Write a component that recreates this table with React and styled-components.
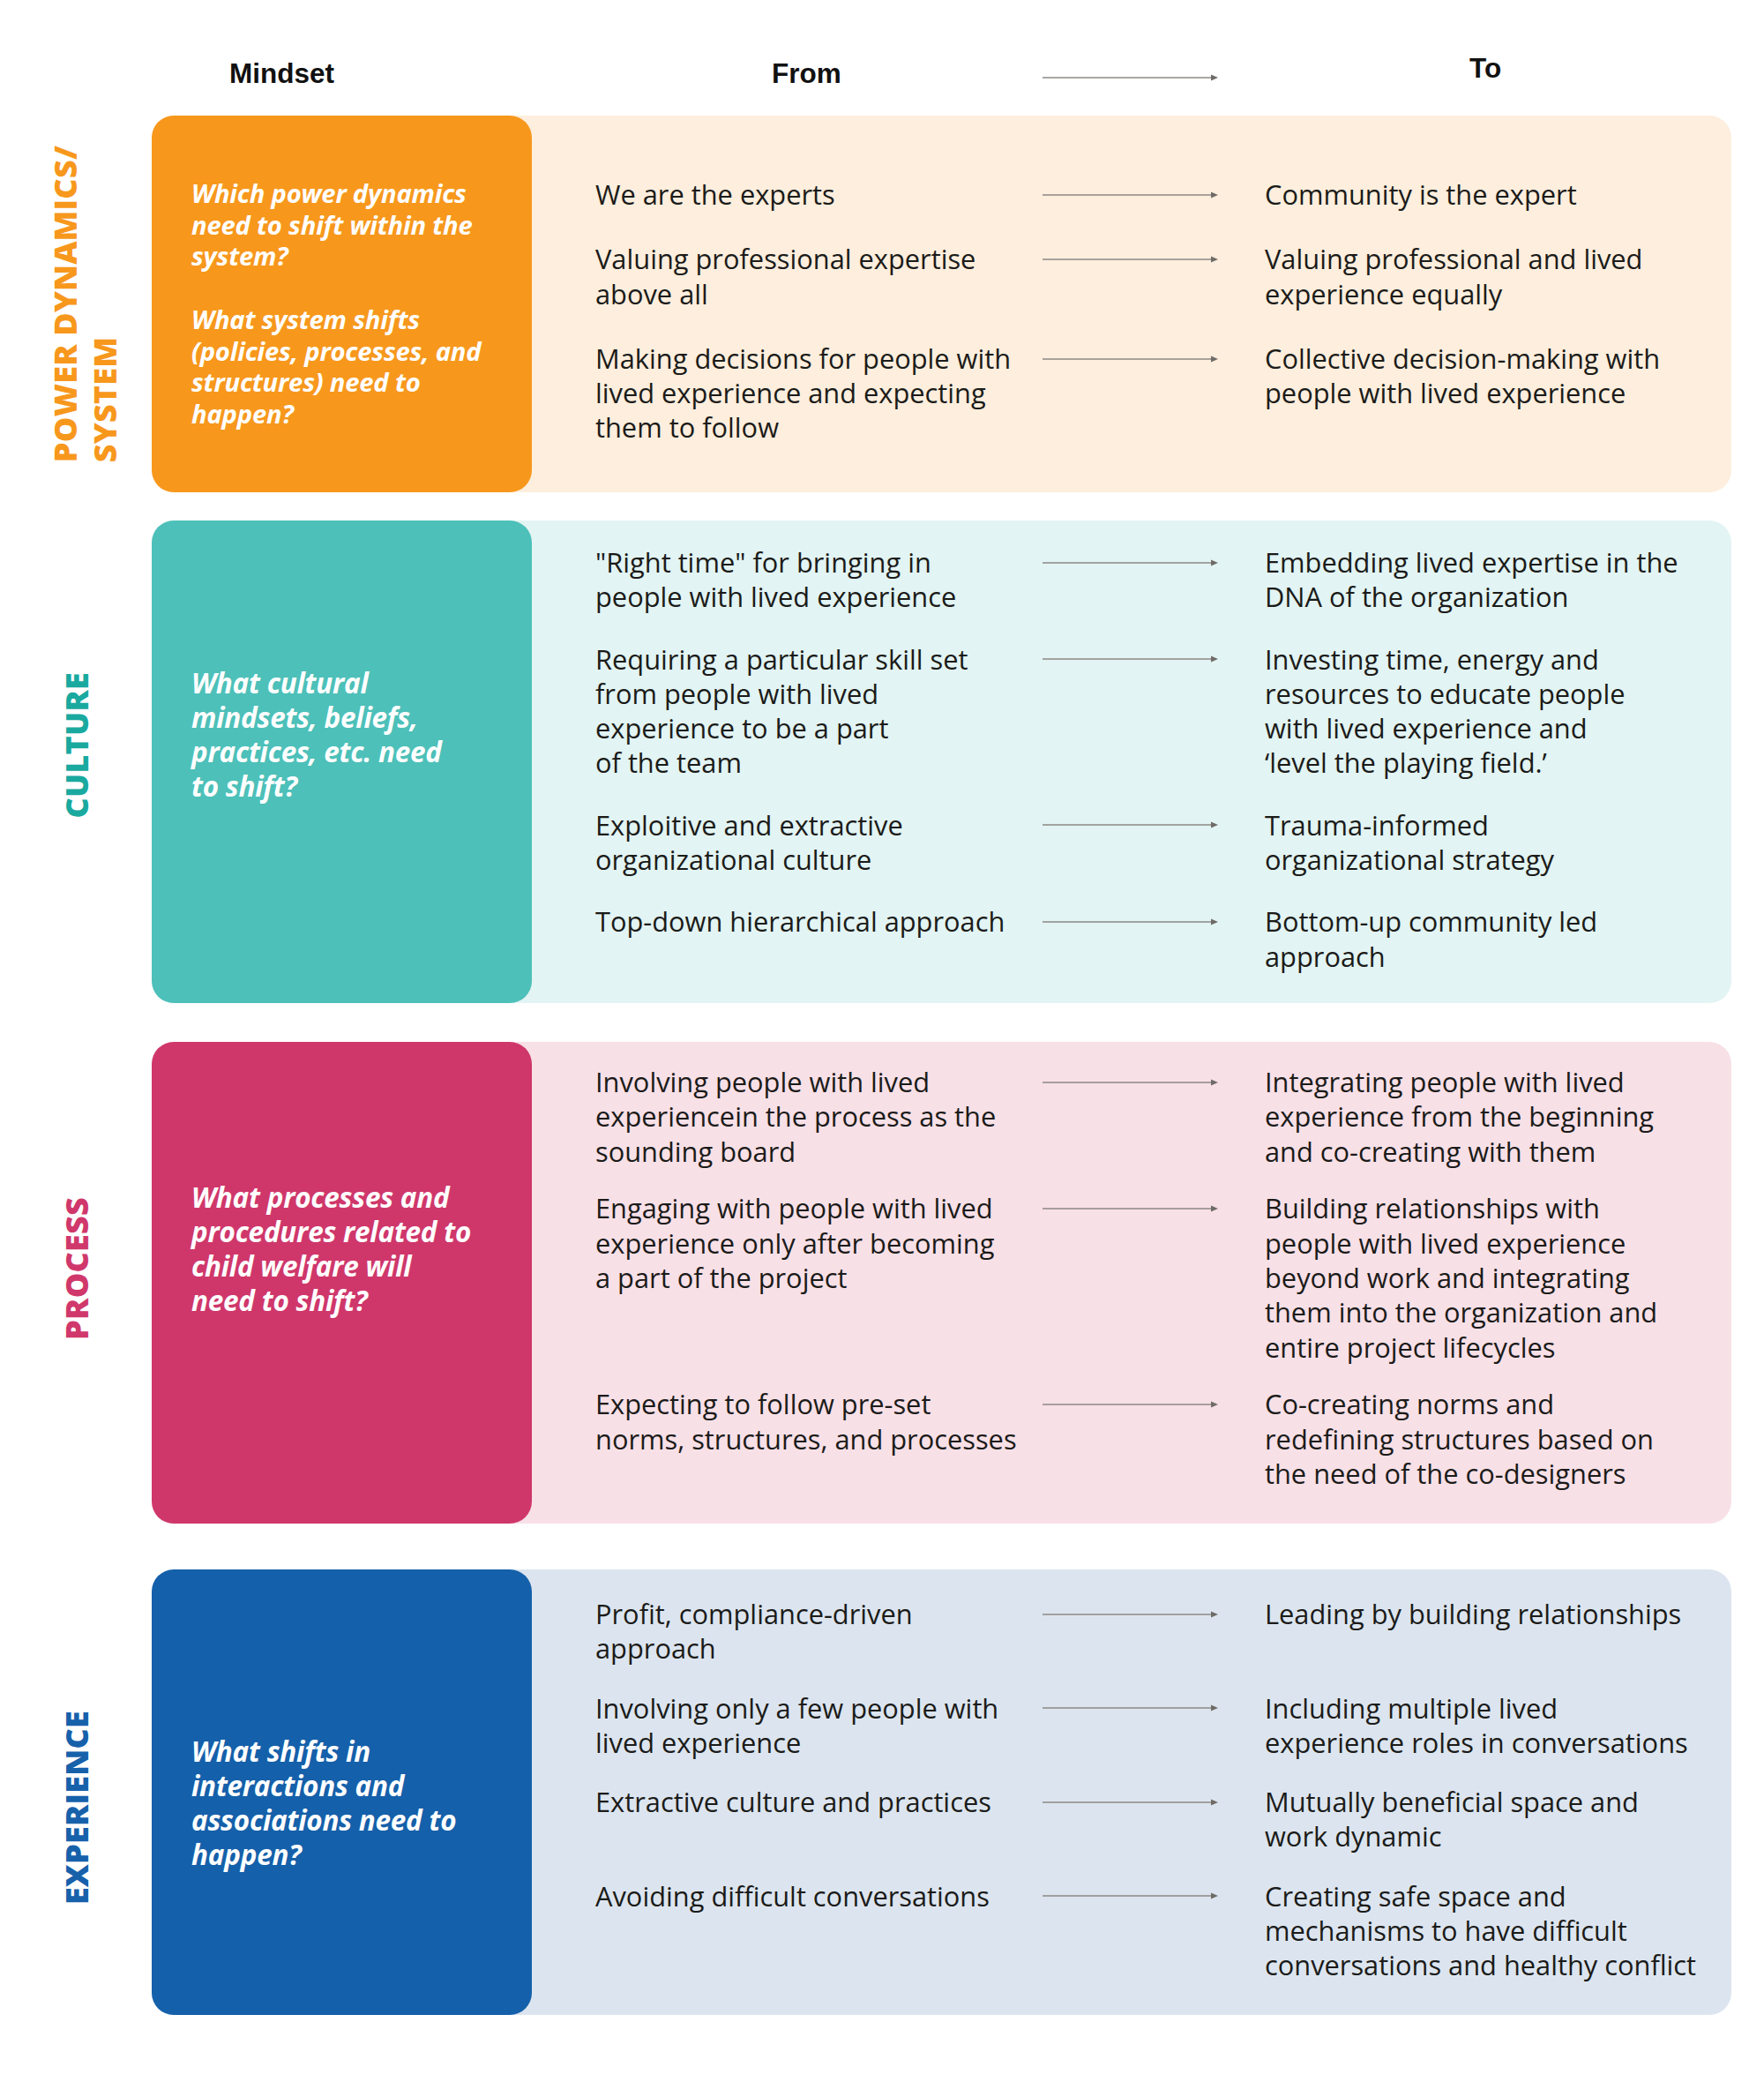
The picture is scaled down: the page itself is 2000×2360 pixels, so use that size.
import React from 'react';
import styled, { createGlobalStyle } from 'styled-components';

const GlobalStyle = createGlobalStyle`
  body {
    margin: 0;
    background: #ffffff;
    font-family: "Open Sans", "Noto Sans", sans-serif;
    color: #1d1d1b;
  }
`;

const Page = styled.div`
  width: 2000px;
  padding: 65px 0 60px;
  box-sizing: border-box;
`;

const HeaderRow = styled.div`
  display: flex;
  align-items: flex-start;
  height: 46px;
  margin-bottom: 20px;
  font-family: "Liberation Sans", Arial, sans-serif;
  font-weight: 700;
  font-size: 31.5px;
  line-height: 36px;
  color: #111111;
`;

const HeaderMindset = styled.div`
  width: 431px;
  margin-left: 172px;
  padding-left: 88px;
  box-sizing: border-box;
`;

const HeaderGrid = styled.div`
  display: grid;
  grid-template-columns: 507px 252px 1fr;
  padding-left: 72px;
  flex: 1;
`;

const HeaderCell = styled.div`
  padding-left: ${({ $indent }) => $indent}px;
  margin-top: ${({ $lift }) => ($lift ? -6 : 0)}px;
`;

const HeaderArrow = styled.div`
  height: 46px;
  display: flex;
  align-items: center;
`;

const Section = styled.section`
  display: flex;
  margin-top: ${({ $gap }) => $gap}px;
`;

const LabelColumn = styled.div`
  width: 172px;
  flex-shrink: 0;
  display: flex;
  align-items: center;
  justify-content: center;
  padding-left: ${({ $shift }) => $shift}px;
  box-sizing: border-box;
`;

const SideLabel = styled.div`
  writing-mode: vertical-rl;
  transform: rotate(180deg);
  font-family: "Open Sans", "Noto Sans", sans-serif;
  font-weight: 800;
  font-size: 36px;
  line-height: 45px;
  letter-spacing: 0.2px;
  white-space: nowrap;
  color: ${({ $color }) => $color};
  margin-top: ${({ $offset }) => ($offset > 0 ? 0 : -2 * $offset)}px;
  margin-bottom: ${({ $offset }) => ($offset > 0 ? 2 * $offset : 0)}px;
`;

const Card = styled.div`
  width: 1791px;
  min-height: ${({ $height }) => $height}px;
  display: flex;
  background: ${({ $light }) => $light};
  border-radius: 25px;
`;

const Block = styled.div`
  width: 431px;
  flex-shrink: 0;
  background: ${({ $color }) => $color};
  border-radius: 25px;
  padding: ${({ $top }) => $top}px 20px 0 45px;
  box-sizing: border-box;
  color: #ffffff;
  font-weight: 700;
  font-style: italic;
  font-size: ${({ $small }) => ($small ? 29.2 : 31.4)}px;
  line-height: ${({ $small }) => ($small ? 35.7 : 39)}px;
  letter-spacing: -0.2px;
`;

const Question = styled.p`
  margin: 0;
  white-space: nowrap;
  & + & {
    margin-top: 35.7px;
  }
`;

const Content = styled.div`
  flex: 1;
  display: flex;
  flex-direction: column;
  gap: ${({ $gap }) => $gap}px;
  padding: ${({ $top }) => $top}px 0 30px 72px;
`;

const Row = styled.div`
  display: grid;
  grid-template-columns: 507px 252px 1fr;
  align-items: start;
`;

const Statement = styled.div`
  font-size: 30.8px;
  line-height: 39.3px;
  font-weight: 400;
  white-space: nowrap;
  color: #1b1b19;
`;

const ArrowCell = styled.div`
  height: 39.3px;
  display: flex;
  align-items: center;
`;

const Arrow = () => (
  <svg width="199" height="10" viewBox="0 0 199 10">
    <line x1="0" y1="5" x2="192" y2="5" stroke="#8d8984" strokeWidth="1.7" />
    <polygon points="191,1.6 199,5 191,8.4" fill="#6f6b67" />
  </svg>
);

const Lines = ({ lines }) =>
  lines.map((l, i) => (
    <React.Fragment key={i}>
      {i > 0 && <br />}
      {l}
    </React.Fragment>
  ));

const sections = [
  {
    label: ['POWER DYNAMICS/', 'SYSTEM'],
    labelColor: '#f7981d',
    color: '#f7981d',
    light: '#fdeedd',
    height: 427,
    gap: 0,
    shift: 20,
    offset: 0,
    small: true,
    blockTop: 71,
    contentTop: 70,
    rowGap: 34,
    questions: [
      ['Which power dynamics', 'need to shift within the', 'system?'],
      ['What system shifts', '(policies, processes, and', 'structures) need to', 'happen?'],
    ],
    rows: [
      [['We are the experts'], ['Community is the expert']],
      [['Valuing professional expertise', 'above all'], ['Valuing professional and lived', 'experience equally']],
      [
        ['Making decisions for people with', 'lived experience and expecting', 'them to follow'],
        ['Collective decision-making with', 'people with lived experience'],
      ],
    ],
  },
  {
    label: ['CULTURE'],
    labelColor: '#1aa99f',
    color: '#4dc0b9',
    light: '#e2f4f3',
    height: 547,
    gap: 32,
    shift: 0,
    offset: 19,
    blockTop: 164,
    contentTop: 28,
    rowGap: 31,
    questions: [['What cultural', 'mindsets, beliefs,', 'practices, etc. need', 'to shift?']],
    rows: [
      [['"Right time" for bringing in', 'people with lived experience'], ['Embedding lived expertise in the', 'DNA of the organization']],
      [
        ['Requiring a particular skill set', 'from people with lived', 'experience to be a part', 'of the team'],
        ['Investing time, energy and', 'resources to educate people', 'with lived experience and', '\u2018level the playing field.\u2019'],
      ],
      [['Exploitive and extractive', 'organizational culture'], ['Trauma-informed', 'organizational strategy']],
      [['Top-down hierarchical approach'], ['Bottom-up community led', 'approach']],
    ],
  },
  {
    label: ['PROCESS'],
    labelColor: '#d0386b',
    color: '#cf376b',
    light: '#f8e0e7',
    height: 546,
    gap: 44,
    shift: 0,
    offset: 16,
    blockTop: 156,
    contentTop: 26,
    rowGap: 25.5,
    questions: [['What processes and', 'procedures related to', 'child welfare will', 'need to shift?']],
    rows: [
      [
        ['Involving people with lived', 'experiencein the process as the', 'sounding board'],
        ['Integrating people with lived', 'experience from the beginning', 'and co-creating with them'],
      ],
      [
        ['Engaging with people with lived', 'experience only after becoming', 'a part of the project'],
        [
          'Building relationships with',
          'people with lived experience',
          'beyond work and integrating',
          'them into the organization and',
          'entire project lifecycles',
        ],
      ],
      [
        ['Expecting to follow pre-set', 'norms, structures, and processes'],
        ['Co-creating norms and', 'redefining structures based on', 'the need of the co-designers'],
      ],
    ],
  },
  {
    label: ['EXPERIENCE'],
    labelColor: '#1761ab',
    color: '#1560aa',
    light: '#dce5ef',
    height: 505,
    gap: 52,
    shift: 0,
    offset: -18,
    blockTop: 186,
    contentTop: 31,
    rowGap: 28,
    questions: [['What shifts in', 'interactions and', 'associations need to', 'happen?']],
    rows: [
      [['Profit, compliance-driven', 'approach'], ['Leading by building relationships']],
      [['Involving only a few people with', 'lived experience'], ['Including multiple lived', 'experience roles in conversations']],
      [['Extractive culture and practices'], ['Mutually beneficial space and', 'work dynamic']],
      [
        ['Avoiding difficult conversations'],
        ['Creating safe space and', 'mechanisms to have difficult', 'conversations and healthy conflict'],
      ],
    ],
  },
];

const MindsetSection = ({ s }) => (
  <Section $gap={s.gap}>
    <LabelColumn $shift={s.shift}>
      <SideLabel $color={s.labelColor} $offset={s.offset}>
        <Lines lines={s.label} />
      </SideLabel>
    </LabelColumn>
    <Card $light={s.light} $height={s.height}>
      <Block $color={s.color} $top={s.blockTop} $small={s.small}>
        {s.questions.map((q, i) => (
          <Question key={i}>
            <Lines lines={q} />
          </Question>
        ))}
      </Block>
      <Content $top={s.contentTop} $gap={s.rowGap}>
        {s.rows.map(([from, to], i) => (
          <Row key={i}>
            <Statement>
              <Lines lines={from} />
            </Statement>
            <ArrowCell>
              <Arrow />
            </ArrowCell>
            <Statement>
              <Lines lines={to} />
            </Statement>
          </Row>
        ))}
      </Content>
    </Card>
  </Section>
);

export default function App() {
  return (
    <>
      <GlobalStyle />
      <Page>
        <HeaderRow>
          <HeaderMindset>Mindset</HeaderMindset>
          <HeaderGrid>
            <HeaderCell $indent={200}>From</HeaderCell>
            <HeaderArrow>
              <Arrow />
            </HeaderArrow>
            <HeaderCell $indent={232} $lift>
              To
            </HeaderCell>
          </HeaderGrid>
        </HeaderRow>
        {sections.map((s) => (
          <MindsetSection key={s.label[0]} s={s} />
        ))}
      </Page>
    </>
  );
}
